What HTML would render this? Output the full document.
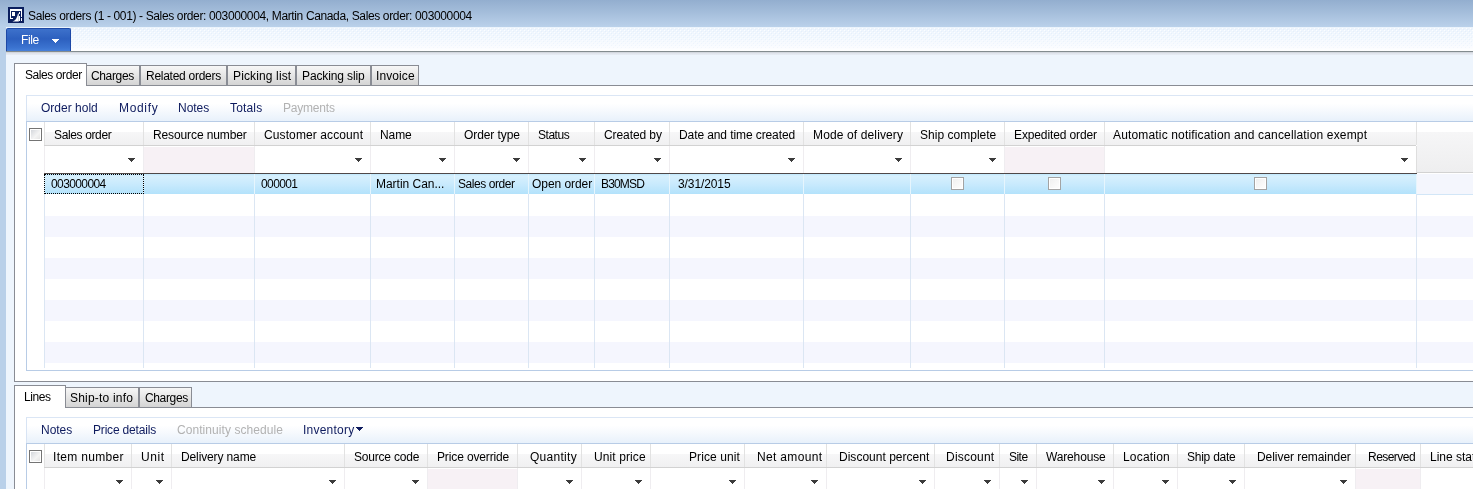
<!DOCTYPE html>
<html><head><meta charset="utf-8"><style>
html,body{margin:0;padding:0;width:1473px;height:489px;overflow:hidden;background:#eef5fd}
div,span,svg{position:absolute}
span{font:12px/14px "Liberation Sans",sans-serif;white-space:pre;will-change:transform}
</style></head><body>
<div style="left:0px;top:0px;width:1473px;height:27px;background:linear-gradient(#93aecf,#a6bfdc 50%,#bad1ea)"></div>
<div style="left:0px;top:27px;width:6px;height:462px;background:#b9d0e9"></div>
<div style="left:6px;top:27px;width:1467px;height:24px;background:linear-gradient(#eaf3fc,#eef5fd 8%,#f2f8fe 45%,#f9fbff 80%,#fff)"></div>
<svg style="left:6px;top:28px" width="1467" height="21"><defs><pattern id="dp" width="4" height="4" patternUnits="userSpaceOnUse"><rect x="0" y="0" width="1" height="1" fill="#ffffff"/><rect x="2" y="2" width="1" height="1" fill="#ffffff"/><rect x="1" y="1" width="1" height="1" fill="#e2edfa"/><rect x="3" y="3" width="1" height="1" fill="#e2edfa"/></pattern><linearGradient id="dg" x1="0" y1="0" x2="0" y2="1"><stop offset="0" stop-color="#fff" stop-opacity="0.9"/><stop offset="1" stop-color="#fff" stop-opacity="0.3"/></linearGradient><mask id="dm"><rect width="1467" height="21" fill="url(#dg)"/></mask></defs><rect width="1467" height="21" fill="url(#dp)" mask="url(#dm)" shape-rendering="crispEdges"/></svg>
<div style="left:6px;top:51px;width:1467px;height:1px;background:#838c8f"></div>
<div style="left:6px;top:52px;width:1467px;height:437px;background:#eef5fd"></div>
<div style="left:6px;top:52px;width:1467px;height:1px;background:#d3d7de"></div>
<div style="left:6px;top:53px;width:1467px;height:2px;background:linear-gradient(#dee2ea,#e8edf5)"></div>
<div style="left:6px;top:28px;width:65px;height:23px;background:linear-gradient(#3d71cb,#2d60bf 45%,#3b73d0 85%,#4680da);border:1px solid #1d48a6;box-sizing:border-box;border-bottom:none;border-radius:2px 2px 0 0"></div>
<div style="left:14px;top:85px;width:1459px;height:297px;background:#fff;border:1px solid #898c94;border-right:none;box-sizing:border-box"></div>
<div style="left:86px;top:65px;width:54px;height:21px;background:linear-gradient(#f7f7f7,#e2e2e2 60%,#d4d4d4);border:1px solid #898c94;box-sizing:border-box"></div>
<div style="left:140px;top:65px;width:87px;height:21px;background:linear-gradient(#f7f7f7,#e2e2e2 60%,#d4d4d4);border:1px solid #898c94;box-sizing:border-box"></div>
<div style="left:227px;top:65px;width:69px;height:21px;background:linear-gradient(#f7f7f7,#e2e2e2 60%,#d4d4d4);border:1px solid #898c94;box-sizing:border-box"></div>
<div style="left:296px;top:65px;width:75px;height:21px;background:linear-gradient(#f7f7f7,#e2e2e2 60%,#d4d4d4);border:1px solid #898c94;box-sizing:border-box"></div>
<div style="left:371px;top:65px;width:48px;height:21px;background:linear-gradient(#f7f7f7,#e2e2e2 60%,#d4d4d4);border:1px solid #898c94;box-sizing:border-box"></div>
<div style="left:14px;top:63px;width:73px;height:23px;background:#fff;border:1px solid #898c94;border-bottom:none;box-sizing:border-box"></div>
<div style="left:26px;top:95px;width:1447px;height:26px;background:linear-gradient(#fff,#fff 30%,#f4f8fd 65%,#e8f1fb);border-top:1px solid #dbe6f5;border-left:1px solid #d8e4f4;box-sizing:border-box"></div>
<div style="left:26px;top:121px;width:1447px;height:250px;background:#fff;border:1px solid #b8cce6;border-right:none;box-sizing:border-box"></div>
<div style="left:44px;top:122px;width:1429px;height:10px;background:#fff"></div>
<div style="left:44px;top:132px;width:1372px;height:13px;background:linear-gradient(#f7f7f8,#f0f0f1)"></div>
<div style="left:44px;top:145px;width:1372px;height:1px;background:#d2d2d2"></div>
<div style="left:1417px;top:132px;width:56px;height:40px;background:linear-gradient(#f6f6f7,#eeeeef)"></div>
<div style="left:1417px;top:172px;width:56px;height:1px;background:#d2d2d2"></div>
<div style="left:144px;top:147px;width:110px;height:26px;background:#f7f1f5"></div>
<div style="left:1005px;top:147px;width:99px;height:26px;background:#f7f1f5"></div>
<div style="left:45px;top:216px;width:1428px;height:21px;background:#f5f6fe"></div>
<div style="left:45px;top:258px;width:1428px;height:21px;background:#f5f6fe"></div>
<div style="left:45px;top:300px;width:1428px;height:21px;background:#f5f6fe"></div>
<div style="left:45px;top:342px;width:1428px;height:21px;background:#f5f6fe"></div>
<div style="left:44px;top:173px;width:1373px;height:1px;background:#4f4848"></div>
<div style="left:44px;top:174px;width:1373px;height:20px;background:linear-gradient(#bfe8fd,#d7f0fd 10%,#c9eafd 50%,#b3e2fb)"></div>
<div style="left:1417px;top:174px;width:56px;height:20px;background:#f4f6fd"></div>
<div style="left:1417px;top:194px;width:56px;height:1px;background:#d2e6f7"></div>
<div style="left:44px;top:122px;width:1px;height:23px;background:#e2e2e2"></div>
<div style="left:44px;top:146px;width:1px;height:27px;background:#efedf0"></div>
<div style="left:44px;top:174px;width:1px;height:20px;background:#e6f5fd"></div>
<div style="left:44px;top:194px;width:1px;height:174px;background:#dbe6f3"></div>
<div style="left:143px;top:122px;width:1px;height:23px;background:#e2e2e2"></div>
<div style="left:143px;top:146px;width:1px;height:27px;background:#efedf0"></div>
<div style="left:143px;top:174px;width:1px;height:20px;background:#e6f5fd"></div>
<div style="left:143px;top:194px;width:1px;height:174px;background:#dbe6f3"></div>
<div style="left:254px;top:122px;width:1px;height:23px;background:#e2e2e2"></div>
<div style="left:254px;top:146px;width:1px;height:27px;background:#efedf0"></div>
<div style="left:254px;top:174px;width:1px;height:20px;background:#e6f5fd"></div>
<div style="left:254px;top:194px;width:1px;height:174px;background:#dbe6f3"></div>
<div style="left:370px;top:122px;width:1px;height:23px;background:#e2e2e2"></div>
<div style="left:370px;top:146px;width:1px;height:27px;background:#efedf0"></div>
<div style="left:370px;top:174px;width:1px;height:20px;background:#e6f5fd"></div>
<div style="left:370px;top:194px;width:1px;height:174px;background:#dbe6f3"></div>
<div style="left:454px;top:122px;width:1px;height:23px;background:#e2e2e2"></div>
<div style="left:454px;top:146px;width:1px;height:27px;background:#efedf0"></div>
<div style="left:454px;top:174px;width:1px;height:20px;background:#e6f5fd"></div>
<div style="left:454px;top:194px;width:1px;height:174px;background:#dbe6f3"></div>
<div style="left:528px;top:122px;width:1px;height:23px;background:#e2e2e2"></div>
<div style="left:528px;top:146px;width:1px;height:27px;background:#efedf0"></div>
<div style="left:528px;top:174px;width:1px;height:20px;background:#e6f5fd"></div>
<div style="left:528px;top:194px;width:1px;height:174px;background:#dbe6f3"></div>
<div style="left:594px;top:122px;width:1px;height:23px;background:#e2e2e2"></div>
<div style="left:594px;top:146px;width:1px;height:27px;background:#efedf0"></div>
<div style="left:594px;top:174px;width:1px;height:20px;background:#e6f5fd"></div>
<div style="left:594px;top:194px;width:1px;height:174px;background:#dbe6f3"></div>
<div style="left:669px;top:122px;width:1px;height:23px;background:#e2e2e2"></div>
<div style="left:669px;top:146px;width:1px;height:27px;background:#efedf0"></div>
<div style="left:669px;top:174px;width:1px;height:20px;background:#e6f5fd"></div>
<div style="left:669px;top:194px;width:1px;height:174px;background:#dbe6f3"></div>
<div style="left:803px;top:122px;width:1px;height:23px;background:#e2e2e2"></div>
<div style="left:803px;top:146px;width:1px;height:27px;background:#efedf0"></div>
<div style="left:803px;top:174px;width:1px;height:20px;background:#e6f5fd"></div>
<div style="left:803px;top:194px;width:1px;height:174px;background:#dbe6f3"></div>
<div style="left:910px;top:122px;width:1px;height:23px;background:#e2e2e2"></div>
<div style="left:910px;top:146px;width:1px;height:27px;background:#efedf0"></div>
<div style="left:910px;top:174px;width:1px;height:20px;background:#e6f5fd"></div>
<div style="left:910px;top:194px;width:1px;height:174px;background:#dbe6f3"></div>
<div style="left:1004px;top:122px;width:1px;height:23px;background:#e2e2e2"></div>
<div style="left:1004px;top:146px;width:1px;height:27px;background:#efedf0"></div>
<div style="left:1004px;top:174px;width:1px;height:20px;background:#e6f5fd"></div>
<div style="left:1004px;top:194px;width:1px;height:174px;background:#dbe6f3"></div>
<div style="left:1104px;top:122px;width:1px;height:23px;background:#e2e2e2"></div>
<div style="left:1104px;top:146px;width:1px;height:27px;background:#efedf0"></div>
<div style="left:1104px;top:174px;width:1px;height:20px;background:#e6f5fd"></div>
<div style="left:1104px;top:194px;width:1px;height:174px;background:#dbe6f3"></div>
<div style="left:1416px;top:122px;width:1px;height:23px;background:#e2e2e2"></div>
<div style="left:1416px;top:146px;width:1px;height:27px;background:#efedf0"></div>
<div style="left:1416px;top:174px;width:1px;height:20px;background:#e6f5fd"></div>
<div style="left:1416px;top:194px;width:1px;height:174px;background:#dbe6f3"></div>
<div style="left:1416px;top:146px;width:1px;height:27px;background:#dedede"></div>
<div style="left:44px;top:174px;width:100px;height:20px;border:1px dotted #000;box-sizing:border-box"></div>
<svg style="left:128px;top:158px" width="7" height="4" shape-rendering="crispEdges"><rect x="0" y="0" width="7" height="1" fill="#3c3c3c"/><rect x="1" y="1" width="5" height="1" fill="#3c3c3c"/><rect x="2" y="2" width="3" height="1" fill="#3c3c3c"/><rect x="3" y="3" width="1" height="1" fill="#3c3c3c"/></svg>
<svg style="left:355px;top:158px" width="7" height="4" shape-rendering="crispEdges"><rect x="0" y="0" width="7" height="1" fill="#3c3c3c"/><rect x="1" y="1" width="5" height="1" fill="#3c3c3c"/><rect x="2" y="2" width="3" height="1" fill="#3c3c3c"/><rect x="3" y="3" width="1" height="1" fill="#3c3c3c"/></svg>
<svg style="left:439px;top:158px" width="7" height="4" shape-rendering="crispEdges"><rect x="0" y="0" width="7" height="1" fill="#3c3c3c"/><rect x="1" y="1" width="5" height="1" fill="#3c3c3c"/><rect x="2" y="2" width="3" height="1" fill="#3c3c3c"/><rect x="3" y="3" width="1" height="1" fill="#3c3c3c"/></svg>
<svg style="left:513px;top:158px" width="7" height="4" shape-rendering="crispEdges"><rect x="0" y="0" width="7" height="1" fill="#3c3c3c"/><rect x="1" y="1" width="5" height="1" fill="#3c3c3c"/><rect x="2" y="2" width="3" height="1" fill="#3c3c3c"/><rect x="3" y="3" width="1" height="1" fill="#3c3c3c"/></svg>
<svg style="left:579px;top:158px" width="7" height="4" shape-rendering="crispEdges"><rect x="0" y="0" width="7" height="1" fill="#3c3c3c"/><rect x="1" y="1" width="5" height="1" fill="#3c3c3c"/><rect x="2" y="2" width="3" height="1" fill="#3c3c3c"/><rect x="3" y="3" width="1" height="1" fill="#3c3c3c"/></svg>
<svg style="left:654px;top:158px" width="7" height="4" shape-rendering="crispEdges"><rect x="0" y="0" width="7" height="1" fill="#3c3c3c"/><rect x="1" y="1" width="5" height="1" fill="#3c3c3c"/><rect x="2" y="2" width="3" height="1" fill="#3c3c3c"/><rect x="3" y="3" width="1" height="1" fill="#3c3c3c"/></svg>
<svg style="left:788px;top:158px" width="7" height="4" shape-rendering="crispEdges"><rect x="0" y="0" width="7" height="1" fill="#3c3c3c"/><rect x="1" y="1" width="5" height="1" fill="#3c3c3c"/><rect x="2" y="2" width="3" height="1" fill="#3c3c3c"/><rect x="3" y="3" width="1" height="1" fill="#3c3c3c"/></svg>
<svg style="left:895px;top:158px" width="7" height="4" shape-rendering="crispEdges"><rect x="0" y="0" width="7" height="1" fill="#3c3c3c"/><rect x="1" y="1" width="5" height="1" fill="#3c3c3c"/><rect x="2" y="2" width="3" height="1" fill="#3c3c3c"/><rect x="3" y="3" width="1" height="1" fill="#3c3c3c"/></svg>
<svg style="left:989px;top:158px" width="7" height="4" shape-rendering="crispEdges"><rect x="0" y="0" width="7" height="1" fill="#3c3c3c"/><rect x="1" y="1" width="5" height="1" fill="#3c3c3c"/><rect x="2" y="2" width="3" height="1" fill="#3c3c3c"/><rect x="3" y="3" width="1" height="1" fill="#3c3c3c"/></svg>
<svg style="left:1401px;top:158px" width="7" height="4" shape-rendering="crispEdges"><rect x="0" y="0" width="7" height="1" fill="#3c3c3c"/><rect x="1" y="1" width="5" height="1" fill="#3c3c3c"/><rect x="2" y="2" width="3" height="1" fill="#3c3c3c"/><rect x="3" y="3" width="1" height="1" fill="#3c3c3c"/></svg>
<div style="left:29px;top:128px;width:13px;height:13px;border:1px solid #747474;box-sizing:border-box;background:#fff"></div>
<div style="left:31px;top:130px;width:9px;height:9px;background:linear-gradient(135deg,#d4d7dc,#f4f4f4 60%,#e4e4e4)"></div>
<div style="left:951px;top:177px;width:13px;height:13px;border:1px solid #a3a3a3;box-sizing:border-box;background:#fff"></div>
<div style="left:953px;top:179px;width:9px;height:9px;background:linear-gradient(135deg,#f0f0f0,#fdfdfd)"></div>
<div style="left:1048px;top:177px;width:13px;height:13px;border:1px solid #a3a3a3;box-sizing:border-box;background:#fff"></div>
<div style="left:1050px;top:179px;width:9px;height:9px;background:linear-gradient(135deg,#f0f0f0,#fdfdfd)"></div>
<div style="left:1254px;top:177px;width:13px;height:13px;border:1px solid #a3a3a3;box-sizing:border-box;background:#fff"></div>
<div style="left:1256px;top:179px;width:9px;height:9px;background:linear-gradient(135deg,#f0f0f0,#fdfdfd)"></div>
<div style="left:14px;top:407px;width:1459px;height:90px;background:#fff;border:1px solid #898c94;border-right:none;box-sizing:border-box"></div>
<div style="left:65px;top:387px;width:74px;height:21px;background:linear-gradient(#f7f7f7,#e2e2e2 60%,#d4d4d4);border:1px solid #898c94;box-sizing:border-box"></div>
<div style="left:139px;top:387px;width:53px;height:21px;background:linear-gradient(#f7f7f7,#e2e2e2 60%,#d4d4d4);border:1px solid #898c94;box-sizing:border-box"></div>
<div style="left:14px;top:385px;width:52px;height:23px;background:#fff;border:1px solid #898c94;border-bottom:none;box-sizing:border-box"></div>
<div style="left:26px;top:417px;width:1447px;height:26px;background:linear-gradient(#fff,#fff 30%,#f4f8fd 65%,#e8f1fb);border-top:1px solid #dbe6f5;border-left:1px solid #d8e4f4;box-sizing:border-box"></div>
<div style="left:26px;top:443px;width:1447px;height:60px;background:#fff;border:1px solid #b8cce6;border-right:none;box-sizing:border-box"></div>
<div style="left:44px;top:444px;width:1429px;height:10px;background:#fff"></div>
<div style="left:44px;top:454px;width:1429px;height:13px;background:linear-gradient(#f7f7f8,#f0f0f1)"></div>
<div style="left:44px;top:467px;width:1429px;height:1px;background:#d2d2d2"></div>
<div style="left:428px;top:469px;width:89px;height:30px;background:#f7f1f5"></div>
<div style="left:1356px;top:469px;width:64px;height:30px;background:#f7f1f5"></div>
<div style="left:44px;top:444px;width:1px;height:23px;background:#e2e2e2"></div>
<div style="left:44px;top:468px;width:1px;height:30px;background:#efedf0"></div>
<div style="left:131px;top:444px;width:1px;height:23px;background:#e2e2e2"></div>
<div style="left:131px;top:468px;width:1px;height:30px;background:#efedf0"></div>
<div style="left:171px;top:444px;width:1px;height:23px;background:#e2e2e2"></div>
<div style="left:171px;top:468px;width:1px;height:30px;background:#efedf0"></div>
<div style="left:344px;top:444px;width:1px;height:23px;background:#e2e2e2"></div>
<div style="left:344px;top:468px;width:1px;height:30px;background:#efedf0"></div>
<div style="left:427px;top:444px;width:1px;height:23px;background:#e2e2e2"></div>
<div style="left:427px;top:468px;width:1px;height:30px;background:#efedf0"></div>
<div style="left:517px;top:444px;width:1px;height:23px;background:#e2e2e2"></div>
<div style="left:517px;top:468px;width:1px;height:30px;background:#efedf0"></div>
<div style="left:581px;top:444px;width:1px;height:23px;background:#e2e2e2"></div>
<div style="left:581px;top:468px;width:1px;height:30px;background:#efedf0"></div>
<div style="left:650px;top:444px;width:1px;height:23px;background:#e2e2e2"></div>
<div style="left:650px;top:468px;width:1px;height:30px;background:#efedf0"></div>
<div style="left:744px;top:444px;width:1px;height:23px;background:#e2e2e2"></div>
<div style="left:744px;top:468px;width:1px;height:30px;background:#efedf0"></div>
<div style="left:826px;top:444px;width:1px;height:23px;background:#e2e2e2"></div>
<div style="left:826px;top:468px;width:1px;height:30px;background:#efedf0"></div>
<div style="left:934px;top:444px;width:1px;height:23px;background:#e2e2e2"></div>
<div style="left:934px;top:468px;width:1px;height:30px;background:#efedf0"></div>
<div style="left:999px;top:444px;width:1px;height:23px;background:#e2e2e2"></div>
<div style="left:999px;top:468px;width:1px;height:30px;background:#efedf0"></div>
<div style="left:1036px;top:444px;width:1px;height:23px;background:#e2e2e2"></div>
<div style="left:1036px;top:468px;width:1px;height:30px;background:#efedf0"></div>
<div style="left:1113px;top:444px;width:1px;height:23px;background:#e2e2e2"></div>
<div style="left:1113px;top:468px;width:1px;height:30px;background:#efedf0"></div>
<div style="left:1177px;top:444px;width:1px;height:23px;background:#e2e2e2"></div>
<div style="left:1177px;top:468px;width:1px;height:30px;background:#efedf0"></div>
<div style="left:1244px;top:444px;width:1px;height:23px;background:#e2e2e2"></div>
<div style="left:1244px;top:468px;width:1px;height:30px;background:#efedf0"></div>
<div style="left:1355px;top:444px;width:1px;height:23px;background:#e2e2e2"></div>
<div style="left:1355px;top:468px;width:1px;height:30px;background:#efedf0"></div>
<div style="left:1420px;top:444px;width:1px;height:23px;background:#e2e2e2"></div>
<div style="left:1420px;top:468px;width:1px;height:30px;background:#efedf0"></div>
<svg style="left:116px;top:480px" width="7" height="4" shape-rendering="crispEdges"><rect x="0" y="0" width="7" height="1" fill="#3c3c3c"/><rect x="1" y="1" width="5" height="1" fill="#3c3c3c"/><rect x="2" y="2" width="3" height="1" fill="#3c3c3c"/><rect x="3" y="3" width="1" height="1" fill="#3c3c3c"/></svg>
<svg style="left:156px;top:480px" width="7" height="4" shape-rendering="crispEdges"><rect x="0" y="0" width="7" height="1" fill="#3c3c3c"/><rect x="1" y="1" width="5" height="1" fill="#3c3c3c"/><rect x="2" y="2" width="3" height="1" fill="#3c3c3c"/><rect x="3" y="3" width="1" height="1" fill="#3c3c3c"/></svg>
<svg style="left:329px;top:480px" width="7" height="4" shape-rendering="crispEdges"><rect x="0" y="0" width="7" height="1" fill="#3c3c3c"/><rect x="1" y="1" width="5" height="1" fill="#3c3c3c"/><rect x="2" y="2" width="3" height="1" fill="#3c3c3c"/><rect x="3" y="3" width="1" height="1" fill="#3c3c3c"/></svg>
<svg style="left:412px;top:480px" width="7" height="4" shape-rendering="crispEdges"><rect x="0" y="0" width="7" height="1" fill="#3c3c3c"/><rect x="1" y="1" width="5" height="1" fill="#3c3c3c"/><rect x="2" y="2" width="3" height="1" fill="#3c3c3c"/><rect x="3" y="3" width="1" height="1" fill="#3c3c3c"/></svg>
<svg style="left:566px;top:480px" width="7" height="4" shape-rendering="crispEdges"><rect x="0" y="0" width="7" height="1" fill="#3c3c3c"/><rect x="1" y="1" width="5" height="1" fill="#3c3c3c"/><rect x="2" y="2" width="3" height="1" fill="#3c3c3c"/><rect x="3" y="3" width="1" height="1" fill="#3c3c3c"/></svg>
<svg style="left:635px;top:480px" width="7" height="4" shape-rendering="crispEdges"><rect x="0" y="0" width="7" height="1" fill="#3c3c3c"/><rect x="1" y="1" width="5" height="1" fill="#3c3c3c"/><rect x="2" y="2" width="3" height="1" fill="#3c3c3c"/><rect x="3" y="3" width="1" height="1" fill="#3c3c3c"/></svg>
<svg style="left:729px;top:480px" width="7" height="4" shape-rendering="crispEdges"><rect x="0" y="0" width="7" height="1" fill="#3c3c3c"/><rect x="1" y="1" width="5" height="1" fill="#3c3c3c"/><rect x="2" y="2" width="3" height="1" fill="#3c3c3c"/><rect x="3" y="3" width="1" height="1" fill="#3c3c3c"/></svg>
<svg style="left:811px;top:480px" width="7" height="4" shape-rendering="crispEdges"><rect x="0" y="0" width="7" height="1" fill="#3c3c3c"/><rect x="1" y="1" width="5" height="1" fill="#3c3c3c"/><rect x="2" y="2" width="3" height="1" fill="#3c3c3c"/><rect x="3" y="3" width="1" height="1" fill="#3c3c3c"/></svg>
<svg style="left:919px;top:480px" width="7" height="4" shape-rendering="crispEdges"><rect x="0" y="0" width="7" height="1" fill="#3c3c3c"/><rect x="1" y="1" width="5" height="1" fill="#3c3c3c"/><rect x="2" y="2" width="3" height="1" fill="#3c3c3c"/><rect x="3" y="3" width="1" height="1" fill="#3c3c3c"/></svg>
<svg style="left:984px;top:480px" width="7" height="4" shape-rendering="crispEdges"><rect x="0" y="0" width="7" height="1" fill="#3c3c3c"/><rect x="1" y="1" width="5" height="1" fill="#3c3c3c"/><rect x="2" y="2" width="3" height="1" fill="#3c3c3c"/><rect x="3" y="3" width="1" height="1" fill="#3c3c3c"/></svg>
<svg style="left:1021px;top:480px" width="7" height="4" shape-rendering="crispEdges"><rect x="0" y="0" width="7" height="1" fill="#3c3c3c"/><rect x="1" y="1" width="5" height="1" fill="#3c3c3c"/><rect x="2" y="2" width="3" height="1" fill="#3c3c3c"/><rect x="3" y="3" width="1" height="1" fill="#3c3c3c"/></svg>
<svg style="left:1098px;top:480px" width="7" height="4" shape-rendering="crispEdges"><rect x="0" y="0" width="7" height="1" fill="#3c3c3c"/><rect x="1" y="1" width="5" height="1" fill="#3c3c3c"/><rect x="2" y="2" width="3" height="1" fill="#3c3c3c"/><rect x="3" y="3" width="1" height="1" fill="#3c3c3c"/></svg>
<svg style="left:1162px;top:480px" width="7" height="4" shape-rendering="crispEdges"><rect x="0" y="0" width="7" height="1" fill="#3c3c3c"/><rect x="1" y="1" width="5" height="1" fill="#3c3c3c"/><rect x="2" y="2" width="3" height="1" fill="#3c3c3c"/><rect x="3" y="3" width="1" height="1" fill="#3c3c3c"/></svg>
<svg style="left:1229px;top:480px" width="7" height="4" shape-rendering="crispEdges"><rect x="0" y="0" width="7" height="1" fill="#3c3c3c"/><rect x="1" y="1" width="5" height="1" fill="#3c3c3c"/><rect x="2" y="2" width="3" height="1" fill="#3c3c3c"/><rect x="3" y="3" width="1" height="1" fill="#3c3c3c"/></svg>
<svg style="left:1340px;top:480px" width="7" height="4" shape-rendering="crispEdges"><rect x="0" y="0" width="7" height="1" fill="#3c3c3c"/><rect x="1" y="1" width="5" height="1" fill="#3c3c3c"/><rect x="2" y="2" width="3" height="1" fill="#3c3c3c"/><rect x="3" y="3" width="1" height="1" fill="#3c3c3c"/></svg>
<div style="left:29px;top:450px;width:13px;height:13px;border:1px solid #747474;box-sizing:border-box;background:#fff"></div>
<div style="left:31px;top:452px;width:9px;height:9px;background:linear-gradient(135deg,#d4d7dc,#f4f4f4 60%,#e4e4e4)"></div>
<svg style="left:52px;top:39px" width="7" height="4" shape-rendering="crispEdges"><rect x="0" y="0" width="7" height="1" fill="#fff"/><rect x="1" y="1" width="5" height="1" fill="#fff"/><rect x="2" y="2" width="3" height="1" fill="#fff"/><rect x="3" y="3" width="1" height="1" fill="#fff"/></svg>
<svg style="left:356px;top:427px" width="7" height="4" shape-rendering="crispEdges"><rect x="0" y="0" width="7" height="1" fill="#0e1b5e"/><rect x="1" y="1" width="5" height="1" fill="#0e1b5e"/><rect x="2" y="2" width="3" height="1" fill="#0e1b5e"/><rect x="3" y="3" width="1" height="1" fill="#0e1b5e"/></svg>
<svg style="left:8px;top:7px" width="16" height="16" viewBox="0 0 16 16" shape-rendering="crispEdges">
<rect x="0" y="0" width="16" height="16" fill="#0b1f5e"/>
<rect x="2" y="2" width="12" height="2" fill="#fff"/>
<rect x="2" y="2" width="1" height="10" fill="#fff"/>
<rect x="2" y="11" width="3" height="1" fill="#fff"/>
<rect x="13" y="2" width="1" height="8" fill="#fff"/>
<rect x="13" y="11" width="1" height="3" fill="#fff"/>
<rect x="4" y="5" width="3" height="4" fill="#fff"/>
<rect x="11" y="5" width="1" height="2" fill="#fff"/>
<rect x="11" y="9" width="1" height="5" fill="#fff"/>
<path d="M4.5 14.5 Q9 13 10 6.5 L10.8 6.5 L10.8 14.5 Z" fill="#fff" shape-rendering="auto"/>
</svg>
<span style="left:28px;top:9px;color:#000;letter-spacing:-0.362px;">Sales orders (1 - 001) - Sales order: 003000004, Martin Canada, Sales order: 003000004</span>
<span style="left:21px;top:33px;color:#fff;letter-spacing:-0.381px;">File</span>
<span style="left:25px;top:68px;color:#000;letter-spacing:-0.417px;">Sales order</span>
<span style="left:91px;top:69px;color:#000;letter-spacing:-0.360px;">Charges</span>
<span style="left:146px;top:69px;color:#000;letter-spacing:-0.271px;">Related orders</span>
<span style="left:233px;top:69px;color:#000;letter-spacing:0.138px;">Picking list</span>
<span style="left:302px;top:69px;color:#000;letter-spacing:-0.121px;">Packing slip</span>
<span style="left:376px;top:69px;color:#000;letter-spacing:0.095px;">Invoice</span>
<span style="left:41px;top:101px;color:#0e1b5e;letter-spacing:0.011px;">Order hold</span>
<span style="left:119px;top:101px;color:#0e1b5e;letter-spacing:0.671px;">Modify</span>
<span style="left:178px;top:101px;color:#0e1b5e;letter-spacing:-0.040px;">Notes</span>
<span style="left:230px;top:101px;color:#0e1b5e;letter-spacing:0.168px;">Totals</span>
<span style="left:283px;top:101px;color:#b2b2b2;letter-spacing:-0.208px;">Payments</span>
<span style="left:54px;top:128px;color:#000;letter-spacing:-0.367px;">Sales order</span>
<span style="left:153px;top:128px;color:#000;letter-spacing:-0.114px;">Resource number</span>
<span style="left:264px;top:128px;color:#000;letter-spacing:0.107px;">Customer account</span>
<span style="left:380px;top:128px;color:#000;letter-spacing:-0.072px;">Name</span>
<span style="left:464px;top:128px;color:#000;letter-spacing:-0.089px;">Order type</span>
<span style="left:538px;top:128px;color:#000;letter-spacing:-0.466px;">Status</span>
<span style="left:604px;top:128px;color:#000;letter-spacing:-0.089px;">Created by</span>
<span style="left:679px;top:128px;color:#000;letter-spacing:-0.094px;">Date and time created</span>
<span style="left:813px;top:128px;color:#000;letter-spacing:0.130px;">Mode of delivery</span>
<span style="left:920px;top:128px;color:#000;letter-spacing:0.021px;">Ship complete</span>
<span style="left:1014px;top:128px;color:#000;letter-spacing:-0.124px;">Expedited order</span>
<span style="left:1113px;top:128px;color:#000;letter-spacing:0.160px;">Automatic notification and cancellation exempt</span>
<span style="left:51px;top:177px;color:#000;letter-spacing:-0.610px;">003000004</span>
<span style="left:261px;top:177px;color:#000;letter-spacing:-0.609px;">000001</span>
<span style="left:376px;top:177px;color:#000;letter-spacing:-0.025px;">Martin Can...</span>
<span style="left:458px;top:177px;color:#000;letter-spacing:-0.427px;">Sales order</span>
<span style="left:532px;top:177px;color:#000;letter-spacing:-0.056px;">Open order</span>
<span style="left:601px;top:177px;color:#000;letter-spacing:-0.826px;">B30MSD</span>
<span style="left:678px;top:177px;color:#000;letter-spacing:-0.099px;">3/31/2015</span>
<span style="left:24px;top:390px;color:#000;letter-spacing:-0.422px;">Lines</span>
<span style="left:70px;top:391px;color:#000;letter-spacing:0.200px;">Ship-to info</span>
<span style="left:145px;top:391px;color:#000;letter-spacing:-0.360px;">Charges</span>
<span style="left:41px;top:423px;color:#0e1b5e;letter-spacing:-0.040px;">Notes</span>
<span style="left:93px;top:423px;color:#0e1b5e;letter-spacing:-0.181px;">Price details</span>
<span style="left:177px;top:423px;color:#b2b2b2;letter-spacing:0.065px;">Continuity schedule</span>
<span style="left:303px;top:423px;color:#0e1b5e;letter-spacing:0.230px;">Inventory</span>
<span style="left:53px;top:450px;color:#000;letter-spacing:0.314px;">Item number</span>
<span style="left:141px;top:450px;color:#000;letter-spacing:0.619px;">Unit</span>
<span style="left:181px;top:450px;color:#000;letter-spacing:-0.125px;">Delivery name</span>
<span style="left:354px;top:450px;color:#000;letter-spacing:-0.199px;">Source code</span>
<span style="left:437px;top:450px;color:#000;letter-spacing:-0.133px;">Price override</span>
<span style="left:530px;top:450px;color:#000;letter-spacing:0.285px;">Quantity</span>
<span style="left:594px;top:450px;color:#000;letter-spacing:0.101px;">Unit price</span>
<span style="left:689px;top:450px;color:#000;letter-spacing:0.097px;">Price unit</span>
<span style="left:757px;top:450px;color:#000;letter-spacing:0.328px;">Net amount</span>
<span style="left:839px;top:450px;color:#000;letter-spacing:0.017px;">Discount percent</span>
<span style="left:946px;top:450px;color:#000;letter-spacing:0.216px;">Discount</span>
<span style="left:1009px;top:450px;color:#000;letter-spacing:-0.529px;">Site</span>
<span style="left:1046px;top:450px;color:#000;letter-spacing:-0.153px;">Warehouse</span>
<span style="left:1123px;top:450px;color:#000;letter-spacing:0.189px;">Location</span>
<span style="left:1187px;top:450px;color:#000;letter-spacing:-0.240px;">Ship date</span>
<span style="left:1257px;top:450px;color:#000;letter-spacing:-0.056px;">Deliver remainder</span>
<span style="left:1368px;top:450px;color:#000;letter-spacing:-0.537px;">Reserved</span>
<span style="left:1430px;top:450px;color:#000;">Line status</span>
</body></html>
